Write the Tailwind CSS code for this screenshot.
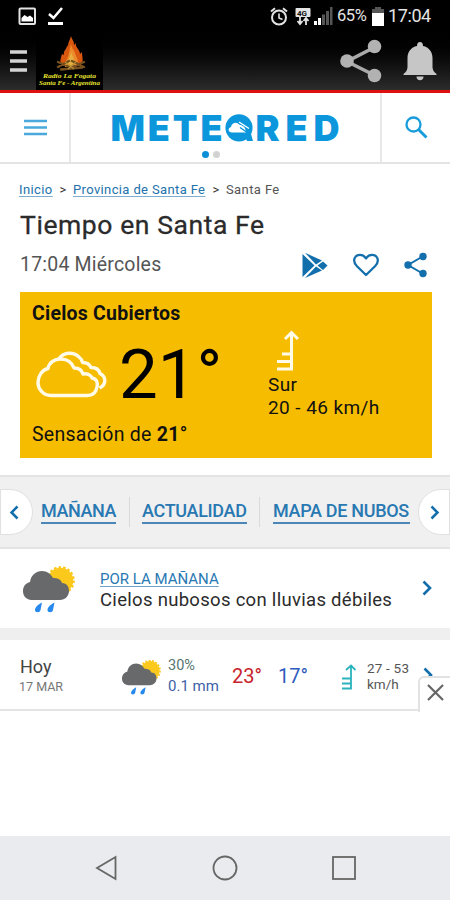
<!DOCTYPE html>
<html lang="es">
<head>
<meta charset="utf-8">
<title>Tiempo en Santa Fe</title>
<script src="https://cdn.jsdelivr.net/npm/@tailwindcss/browser@4"></script>
</head>
<body class="w-[450px] h-[900px] overflow-hidden bg-white font-[Roboto,sans-serif] text-[#333] flex flex-col whitespace-nowrap">

<header class="h-[93px] shrink-0 bg-linear-to-b from-black from-30% to-[#2c2c2c] border-b-3 border-[#e01010] flex flex-col">
  <div class="h-8 flex items-center pl-[18px] pr-[18px] text-[#e4e4e4]">
    <svg class="w-[19px] h-[19px]" viewBox="0 0 19 19"><rect x="1.500" y="1.500" width="15.500" height="15.500" rx="1" fill="none" stroke="#e4e4e4" stroke-width="2"/><path d="M3.500 14.500V11l3-3 3 2 2.500-1.500 3 2.500v3.500z" fill="#fff"/></svg>
    <svg class="w-[17px] h-[20px] ml-[10px]" viewBox="0 0 17 20"><path d="M2 8l4.500 4L15 2" fill="none" stroke="#fff" stroke-width="2.600"/><path d="M1 17.500h15" stroke="#fff" stroke-width="3"/></svg>
    <svg class="w-[18px] h-[19px] ml-auto" viewBox="0 0 18 19" fill="none" stroke="#e4e4e4"><circle cx="9" cy="10.500" r="7" stroke-width="2"/><path d="M9 6.500v4.500l3.500 1.500" stroke-width="1.600"/><path d="M1 4.500L5 1.200M17 4.500L13 1.200" stroke-width="2"/></svg>
    <svg class="w-[16px] h-[19px] ml-[7px]" viewBox="0 0 16 19"><rect x=".5" y="1" width="15" height="9" rx="1" fill="#e4e4e4"/><text x="2" y="8.500" font-family="Roboto" font-weight="700" font-size="8" fill="#111">4G</text><path d="M5 10v7M2.500 14L5 17l2.500-3M11 18v-6M8.500 14L11 11l2.500 3" fill="none" stroke="#e4e4e4" stroke-width="1.800"/></svg>
    <svg class="w-[19px] h-[19px] ml-[3px]" viewBox="0 0 19 19"><path d="M0 14h3v4H0zM4 11h3v7H4z" fill="#fff"/><path d="M8 7.500h3V18H8zM12 4h3v14h-3zM16 0h2.500v18H16z" fill="#555"/></svg>
    <span class="ml-[4px] w-[35px] text-[16.500px] tracking-[-0.4px] leading-8">65%</span>
    <svg class="w-[12px] h-[19px]" viewBox="0 0 12 19"><path d="M3 0h6v2h3v5H0V2h3z" fill="#555"/><path d="M0 6h12v13H0z" fill="#fff"/></svg>
    <span class="ml-[4px] w-[44px] text-[18px] tracking-[-0.4px] leading-8">17:04</span>
  </div>
  <div class="flex-1 flex items-center pr-[13px]">
    <svg class="w-[17px] h-[23px] ml-[10px]" viewBox="0 0 17 23"><path d="M0 2h17M0 11h17M0 20h17" stroke="#d4d4d4" stroke-width="3.500"/></svg>
    <div class="ml-[9px] w-[67px] h-[58px] bg-black flex flex-col items-center">
      <svg class="w-[67px] h-[58px]" viewBox="0 0 67 58">
        <path d="M35 4c1 4 3 4 3 9l2-2c-1 5 4 6 4 11l2-2c0 5 2 9-1 13H26c-3-3-1-7 0-11l2 1c-1-5 3-5 3-10l1 2c0-5 2-7 3-11z" fill="#d9570f"/>
        <path d="M35 12c1 5 4 7 5 12 2 3 3 7 0 11H29c-1-4 1-6 3-10 1-4 2-8 3-13z" fill="#ec8a2c"/>
        <path d="M35 20c2 5 4 8 3 14h-7c0-5 3-8 4-14z" fill="#e5b03f"/>
        <path d="M22 30l12 5m-12 0l11-6m15 1l-12 5m12 0l-12-6M25 37.500l21-2" stroke="#76501f" stroke-width="2.400" stroke-linecap="round"/>
        <path d="M29 30l9 7m2-7l-8 7" stroke="#b98d34" stroke-width="1.200"/>
        <text x="7" y="46" textLength="53" lengthAdjust="spacingAndGlyphs" font-family="Liberation Serif,serif" font-style="italic" font-weight="700" font-size="6.500" fill="#e8e531">Radio La Fogata</text>
        <text x="3" y="52.500" textLength="61" lengthAdjust="spacingAndGlyphs" font-family="Liberation Serif,serif" font-style="italic" font-weight="700" font-size="6" fill="#e8e531">Santa Fe - Argentina</text>
      </svg>
    </div>
    <svg class="w-[42px] h-[44px] ml-auto" viewBox="0 0 42 44"><path d="M35 8L7 22.500l28 14" fill="none" stroke="#a9a9a9" stroke-width="3.600"/><g fill="#b2b2b2"><circle cx="34.500" cy="7.500" r="6.800"/><circle cx="7" cy="22" r="6.800"/><circle cx="34.500" cy="36.500" r="6.800"/></g></svg>
    <svg class="w-[34px] h-[40px] ml-[21px]" viewBox="0 0 34 40" fill="#c6c6c6"><path d="M17 1c2 0 3 1.500 3 4 6 1 9.500 6 9.500 12v9c0 3 1.500 5 4 7v1H.5v-1c2.500-2 4-4 4-7v-9C4.500 11 8 6 14 5c0-2.500 1-4 3-4z"/><path d="M13.500 35.500h7c0 2.500-1.500 3.800-3.500 3.800s-3.500-1.300-3.500-3.800z"/></svg>
  </div>
</header>

<nav class="h-[71px] shrink-0 border-b-2 border-[#e4e4e4] flex">
  <div class="w-[71px] border-r-2 border-[#e8e8e8] flex items-center pl-6">
    <svg class="w-[23px] h-[17px]" viewBox="0 0 23 17"><path d="M0 2h23M0 8.500h23M0 15h23" stroke="#4aa8dc" stroke-width="2.400"/></svg>
  </div>
  <div class="flex-1 flex flex-col items-center pt-[10px]">
    <svg class="w-[248px] h-[48px]" viewBox="-10 -10 248 48" fill="#0c97dd">
      <text x="-1.500" y="28" textLength="112" font-family="Inter" font-weight="900" font-size="36">METE</text>
      <circle cx="127" cy="14.800" r="13.600"/><path d="M132 21h7l2 7h-6z"/>
      <path d="M120 19.500c-4 0-4.500-4.500-1-5.500.5-4.500 6-6 8.500-2.200 4 0 6 2.700 6.500 7.700z" fill="#fff"/>
      <path d="M125 8.500l13 8M128 14.500l8 5.500" stroke="#0c97dd" stroke-width="1.500"/>
      <path d="M127 9l10 6.500" stroke="#fff" stroke-width="1.400"/>
      <text x="143.500" y="28" textLength="84" font-family="Inter" font-weight="900" font-size="36">RED</text>
    </svg>
    <div class="flex gap-1 mr-[30px]"><i class="size-[7px] rounded-full bg-[#0c8fd6]"></i><i class="size-[7px] rounded-full bg-[#d2d2d2]"></i></div>
  </div>
  <div class="w-[70px] border-l-2 border-[#e8e8e8] flex items-center justify-center">
    <svg class="w-[23px] h-[23px]" viewBox="0 0 23 23" fill="none" stroke="#199cdb"><circle cx="8.500" cy="8.500" r="7" stroke-width="2.300"/><path d="M13.500 13.500l8 8" stroke-width="3"/></svg>
  </div>
</nav>

<main class="shrink-0 px-5 pt-[15px] h-[311px]">
  <div class="flex h-5 text-[13px] leading-[22px] ml-[-1px]">
    <a class="w-[34px] text-[#2272ac] tracking-[0.4px] underline underline-offset-2 decoration-[#7fadd0]">Inicio</a>
    <span class="w-5 text-center">&gt;</span>
    <a class="w-[133px] text-[#2272ac] tracking-[0.37px] underline underline-offset-2 decoration-[#7fadd0]">Provincia de Santa Fe</a>
    <span class="w-5 text-center">&gt;</span>
    <span class="text-[#555] tracking-[0.4px]">Santa Fe</span>
  </div>
  <h1 class="mt-[10px] h-8 text-[26.500px] leading-8 text-[#2b2b2b] tracking-[0.58px] [-webkit-text-stroke:0.3px_#2b2b2b]">Tiempo en Santa Fe</h1>
  <div class="mt-[9px] h-[30px] flex items-center">
    <span class="text-[19.500px] leading-[32px] text-[#555] tracking-[0.2px]">17:04 Miércoles</span>
    <svg class="w-[26px] h-[27px] ml-auto" viewBox="0 0 26 27"><path d="M.5 2v23L12.500 13.500zM3 .8L20 8.500 14 12.500zM3 26l17-7.500-6-4zM21 9.500l4.500 4-4.500 4.500-5.500-4.500z" fill="#126fac"/></svg>
    <svg class="w-[26px] h-[24px] ml-[25px]" viewBox="0 0 26 24"><path d="M13 22L4 13.200C-1.500 7.500 2 1.800 7 1.800c3 0 4.800 1.600 6 3.600 1.200-2 3-3.600 6-3.600 5 0 8.500 5.700 3 11.400z" fill="none" stroke="#126fac" stroke-width="2.300" stroke-linejoin="round"/></svg>
    <svg class="w-[23px] h-[26px] ml-[25px] mr-[3px]" viewBox="0 0 23 26"><path d="M19.500 4L4 13l15.500 9" fill="none" stroke="#126fac" stroke-width="2"/><g fill="#126fac"><circle cx="19" cy="4.500" r="3.700"/><circle cx="4" cy="13" r="3.700"/><circle cx="19" cy="21.500" r="3.700"/></g></svg>
  </div>
  <section class="mt-[12px] w-[412px] h-[166px] bg-[#f6bd00] text-[#111] flex pl-3">
    <div class="w-[236px] pt-[10px] text-[19.500px] leading-6">
      <h2 class="font-bold text-[19.500px] tracking-[0.23px]">Cielos Cubiertos</h2>
      <div class="flex items-start h-[97px]">
        <svg class="w-[72px] h-[48px] mt-[25px] ml-[4px]" viewBox="0 0 72 48" fill="none" stroke="#fffbe8" stroke-width="3.400" stroke-linejoin="round"><path d="M15 44.500C7 44.500 2 38 2 31.500S6 19 12 17.500C13 12 18 8 25 8c6 0 11 3.500 13 9 5 0 8 2.500 9 6 4-1 8 1 9 4 5 1 6 5 5 9-1 6-5 8.500-10 8.500z"/><path d="M23 8C27 1 37 .5 43 6c2 1.500 3 3 3.500 5.500 4 0 7 1.500 8.500 5 5 0 8 2 9 6 6 3 7 11-.5 14.500"/></svg>
        <span class="ml-[11px] mt-[14px] text-[69px] leading-[70px] text-black">21°</span>
      </div>
      <p class="tracking-[0.28px]">Sensación de <b>21°</b></p>
    </div>
    <div class="pt-[38px] text-[19px] leading-[23px] tracking-[0.42px]">
      <svg class="w-[24px] h-[42px] ml-[9px] mb-px" viewBox="0 0 24 42" fill="none" stroke="#fffbe8" stroke-width="3"><path d="M0 39h14.500V3M8 9L14.500 2.500 21 9M5 24h9M0 31.500h14"/></svg>
      <p>Sur</p>
      <p>20 - 46 km/h</p>
    </div>
  </section>
</main>

<section class="h-[74px] shrink-0 bg-[#f0f0f0] border-y-2 border-[#e4e4e4] flex items-center justify-between">
  <div class="w-[33px] h-[46px] bg-white rounded-r-full border border-[#e0e0e0] flex items-center pl-[8px]"><svg class="w-[10px] h-[15px]" viewBox="0 0 10 15"><path d="M8.500 1.500l-6 6 6 6" fill="none" stroke="#126fac" stroke-width="2.500"/></svg></div>
  <div class="flex-1 flex items-center pl-[8px] text-[18px] font-medium text-[#2878b2] tracking-[-0.32px]">
    <a class="w-[75px] leading-[22px] border-b-2 border-[#4b86b6] tracking-[-0.45px]">MAÑANA</a>
    <i class="w-px h-[30px] bg-[#dadada] ml-[13px] mr-[12px]"></i>
    <a class="w-[105px] leading-[22px] border-b-2 border-[#4b86b6]">ACTUALIDAD</a>
    <i class="w-px h-[30px] bg-[#dadada] ml-[12px] mr-[13px]"></i>
    <a class="w-[137px] leading-[22px] border-b-2 border-[#4b86b6]">MAPA DE NUBOS</a>
  </div>
  <div class="w-[32px] h-[46px] bg-white rounded-l-full border border-[#e0e0e0] flex items-center pl-[11px]"><svg class="w-[10px] h-[15px]" viewBox="0 0 10 15"><path d="M1.500 1.500l6 6-6 6" fill="none" stroke="#126fac" stroke-width="2.500"/></svg></div>
</section>

<section class="h-[79px] shrink-0 flex pl-[22px]">
  <svg class="w-[54px] h-[48px] mt-[16px]" viewBox="0 0 54 48"><circle cx="38.500" cy="15.500" r="12.700" fill="#fbc81c"/><circle cx="38.500" cy="15.500" r="13.200" fill="none" stroke="#fbc81c" stroke-width="2.200" stroke-dasharray="2.600 2"/><path d="M9 35C3 34 1 30 1 26c0-5 3-8 7-9C9 10 14 6 20 6c5 0 9 3 11 7 4 0 8 1 9 5 5 0 7 4 7 8 0 5-4 9-9 9z" fill="#68696b"/><path d="M20 37.500c-4 2-7 5-7 7.500 0 3 5 3 5.500 0zM32.500 37.500c-4 2-7 5-7 7.500 0 3 5 3 5.500 0z" fill="#2788ee"/></svg>
  <div class="ml-[24px] w-[322px] pt-[20px]">
    <a class="block w-[119px] text-[15px] leading-[21px] text-[#2878b2] underline underline-offset-2 decoration-[#6fa3ca]">POR LA MAÑANA</a>
    <p class="text-[18.500px] leading-[21px] text-[#2b2b2b] tracking-[0.3px]">Cielos nubosos con lluvias débiles</p>
  </div>
  <svg class="w-[10px] h-[16px] mt-[31px]" viewBox="0 0 10 16"><path d="M1.500 1.500L8 8l-6.500 6.500" fill="none" stroke="#126fac" stroke-width="2.600"/></svg>
</section>

<section class="relative h-[83px] shrink-0 border-t-12 border-b-2 border-t-[#efefef] border-b-[#e4e4e4] flex pl-5">
  <div class="w-[101px] pt-[16px]">
    <p class="text-[18px] leading-[22px] text-[#444]">Hoy</p>
    <p class="text-[12.500px] leading-[17px] text-[#777] ml-[-1px]">17 MAR</p>
  </div>
  <svg class="w-[41px] h-[36px] mt-[19px]" viewBox="0 0 54 48"><circle cx="38.500" cy="15.500" r="12.700" fill="#fbc81c"/><circle cx="38.500" cy="15.500" r="13.200" fill="none" stroke="#fbc81c" stroke-width="2.200" stroke-dasharray="2.600 2"/><path d="M9 35C3 34 1 30 1 26c0-5 3-8 7-9C9 10 14 6 20 6c5 0 9 3 11 7 4 0 8 1 9 5 5 0 7 4 7 8 0 5-4 9-9 9z" fill="#68696b"/><path d="M20 37.500c-4 2-7 5-7 7.500 0 3 5 3 5.500 0zM32.500 37.500c-4 2-7 5-7 7.500 0 3 5 3 5.500 0z" fill="#2788ee"/></svg>
  <div class="ml-[6px] w-[64px] pt-[16px] text-[15px] leading-5">
    <p class="text-[#55756f] text-[14.500px]">30%</p>
    <p class="text-[#3d5fa8]">0.1 mm</p>
  </div>
  <span class="w-[46px] pt-[24px] text-[20px] leading-6 text-[#c8232c]">23°</span>
  <span class="w-[63px] pt-[24px] text-[20px] leading-6 text-[#2f5cc0]">17°</span>
  <svg class="w-[15px] h-[26px] mt-[24px]" viewBox="0 0 15 26" fill="none" stroke="#2bb3bd" stroke-width="1.800"><path d="M1 24.500h9V2M5 6l5-4.500L14.500 6M1 14.500h9M1 19.500h9"/></svg>
  <div class="ml-[11px] w-[56px] pt-[20px] text-[13.500px] leading-4 text-[#555]"><p class="tracking-[0.2px]">27 - 53</p><p>km/h</p></div>
  <svg class="w-[10px] h-[16px] mt-[27px]" viewBox="0 0 10 16"><path d="M1.500 1.500L8 8l-6.500 6.500" fill="none" stroke="#126fac" stroke-width="2.600"/></svg>
  <button class="absolute right-[-2px] top-[36px] w-[34px] h-[36px] bg-white border-l-2 border-t-2 border-[#e2e2e2] rounded-tl-md flex items-start pt-[6px] pl-[7px]"><svg class="w-[17px] h-[17px]" viewBox="0 0 17 17"><path d="M1 1l15 15M16 1L1 16" stroke="#666" stroke-width="2.200"/></svg></button>
</section>

<div class="flex-1"></div>

<footer class="h-16 shrink-0 bg-[#e9ebee] flex items-center pl-[95px]">
  <svg class="w-[22px] h-[26px]" viewBox="0 0 22 26"><path d="M20.500 2v22L2 13z" fill="none" stroke="#666" stroke-width="1.800"/></svg>
  <svg class="w-[26px] h-[26px] ml-[95px]" viewBox="0 0 26 26"><circle cx="13" cy="13" r="11.500" fill="none" stroke="#666" stroke-width="1.800"/></svg>
  <svg class="w-[26px] h-[26px] ml-[93px]" viewBox="0 0 26 26"><rect x="2" y="2" width="22" height="22" fill="none" stroke="#666" stroke-width="1.800"/></svg>
</footer>
</body>
</html>
